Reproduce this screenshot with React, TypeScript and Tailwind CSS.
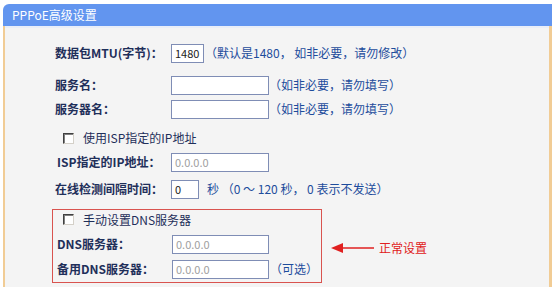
import React from "react";

const font = { fontFamily: '"Noto Sans CJK SC", "Liberation Sans", sans-serif' };

function Checkbox() {
  return (
    <span className="inline-block w-[11px] h-[11px] bg-white border border-t-[#404040] border-l-[#404040] border-b-[#d4d0c8] border-r-[#d4d0c8] shadow-[inset_1px_1px_0_#808080]" />
  );
}

function Input({ w, value, muted }: { w: string; value?: string; muted?: boolean }) {
  return (
    <div
      className={`${w} h-[19px] bg-white border border-[#7f8db5] flex items-center px-[3px] text-[11px] leading-none font-normal ${
        muted ? "text-[#a0a0a0]" : "text-[#222]"
      }`}
    >
      {value}
    </div>
  );
}

export default function App() {
  return (
    <div className="w-[554px] h-[289px] bg-white overflow-hidden" style={font}>
      <div className="ml-[3px] mt-[4px] w-[549px]">
        <div className="h-[22px] bg-[#6295ef] rounded-tl-[6px] flex items-center pl-[9px] text-white text-[12px] leading-none">
          PPPoE高级设置
        </div>
        <div className="h-[2px] bg-[#e9eef8] border-l-2 border-r-[3px] border-[#f1cc95]" />
        <div className="h-[259px] bg-[#f4f4f4] border-l-2 border-r-[3px] border-[#f1cc95] pl-[50px] text-[12px] leading-none font-bold text-[#1f2f5a]">
          <div className="h-[13px]" />
          {/* Row 1 */}
          <div className="h-[24px] flex items-center">
            <div className="w-[116px]">数据包MTU(字节)：</div>
            <Input w="w-[33px]" value="1480" />
            <div className="ml-[1px] text-[#1d4c9c] font-normal">（默认是1480， 如非必要，请勿修改）</div>
          </div>
          <div className="h-[8px]" />
          {/* Row 2 */}
          <div className="h-[24px] flex items-center">
            <div className="w-[116px]">服务名：</div>
            <Input w="w-[98px]" />
            <div className="text-[#1d4c9c] font-normal">（如非必要，请勿填写）</div>
          </div>
          {/* Row 3 */}
          <div className="h-[24px] flex items-center">
            <div className="w-[116px]">服务器名：</div>
            <Input w="w-[98px]" />
            <div className="text-[#1d4c9c] font-normal">（如非必要，请勿填写）</div>
          </div>
          <div className="h-[5px]" />
          {/* Row 4 */}
          <div className="h-[24px] flex items-center pl-[8px] font-normal">
            <Checkbox />
            <span className="ml-[9px]">使用ISP指定的IP地址</span>
          </div>
          {/* Row 5 */}
          <div className="h-[24px] flex items-center">
            <div className="w-[116px] pl-[2px]">ISP指定的IP地址：</div>
            <Input w="w-[98px]" value="0.0.0.0" muted />
          </div>
          <div className="h-[3px]" />
          {/* Row 6 */}
          <div className="h-[24px] flex items-center">
            <div className="w-[116px]">在线检测间隔时间：</div>
            <Input w="w-[28px]" value="0" />
            <div className="ml-[8px] text-[#1d4c9c] font-normal">秒 （0 ～ 120 秒， 0 表示不发送）</div>
          </div>
          <div className="h-[8px]" />
          {/* DNS box */}
          <div className="flex items-center -ml-[3px]">
            <div className="w-[270px] border border-[#d9534f] pl-[4px] pb-[1px]">
              <div className="h-[19px] flex items-center pl-[6px] font-normal">
                <Checkbox />
                <span className="ml-[9px]">手动设置DNS服务器</span>
              </div>
              <div className="h-[24px] mt-[3px] flex items-center">
                <div className="w-[115px]">DNS服务器：</div>
                <Input w="w-[97px]" value="0.0.0.0" muted />
              </div>
              <div className="h-[24px] mt-[1px] flex items-center">
                <div className="w-[115px]">备用DNS服务器：</div>
                <Input w="w-[97px]" value="0.0.0.0" muted />
                <div className="ml-[1px] text-[#1d4c9c] font-normal">（可选）</div>
              </div>
            </div>
            <div className="ml-[9px] mt-[4px] flex items-center">
              <svg width="43" height="10" viewBox="0 0 43 10">
                <polygon points="0,5 12,0 12,10" fill="#e02020" />
                <line x1="11" y1="5" x2="43" y2="5" stroke="#e02020" strokeWidth="1.5" />
              </svg>
              <span className="ml-[5px] text-[#e02020] font-normal text-[12px]">正常设置</span>
            </div>
          </div>
        </div>
      </div>
    </div>
  );
}
